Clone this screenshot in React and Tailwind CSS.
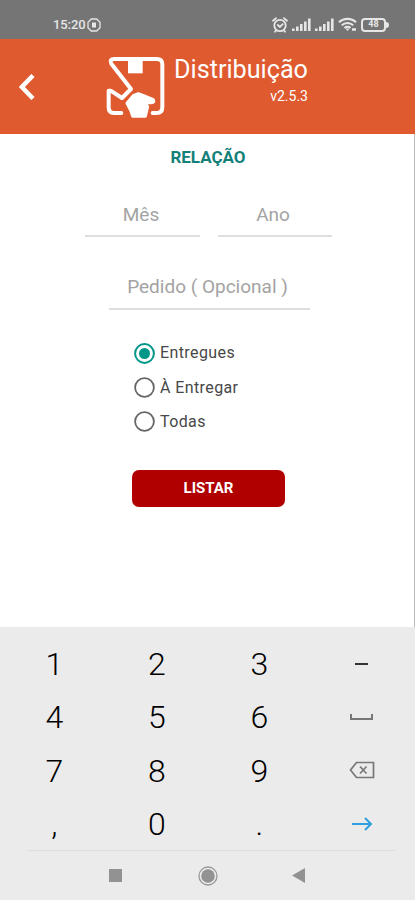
// Distribuicao - ecran "Relacao" avec clavier numerique
import { useState } from 'react';

const OPTIONS = [
  { id: 'entregues', label: 'Entregues' },
  { id: 'a-entregar', label: 'À Entregar' },
  { id: 'todas', label: 'Todas' },
];

const KEYS = ['1', '2', '3', 'minus', '4', '5', '6', 'space', '7', '8', '9', 'backspace', ',', '0', '.', 'next'];

function Signal() {
  return (
    <svg width="19" height="14" viewBox="0 0 19 14" fill="#e6e6e6">
      <rect x="0" y="10.5" width="2.6" height="2.5" />
      <rect x="4" y="8.5" width="2.6" height="4.5" />
      <rect x="8" y="6" width="2.6" height="7" />
      <rect x="12" y="3.5" width="2.6" height="9.5" />
      <rect x="16" y="0.5" width="2.6" height="12.5" />
    </svg>
  );
}

function StatusBar() {
  return (
    <div className="flex h-[39px] shrink-0 items-center bg-[#757575] pt-[10px] pr-[26px] pl-[53px] text-[#e6e6e6]">
      <span className="text-[13px] leading-4 font-medium tracking-[-0.1px]">15:20</span>
      <svg className="ml-[2px]" width="14" height="14" viewBox="0 0 14 14" fill="none" stroke="currentColor" strokeWidth="1.3">
        <path d="M4.3 1h5.4L13 4.3v5.4L9.7 13H4.3L1 9.7V4.3z" />
        <rect x="5" y="4.5" width="4" height="5" fill="currentColor" stroke="none" />
      </svg>
      <div className="ml-auto flex items-center">
        <svg width="16" height="16" viewBox="0 0 16 16" fill="none" stroke="currentColor" strokeWidth="1.8" strokeLinecap="round">
          <circle cx="8" cy="8.5" r="5.7" />
          <path d="M1 3.7 4 1.2M15 3.7 12 1.2M5.8 8l2.1 2 2.8-2.8M4 13.5l-1 1.3M12 13.5l1 1.3" />
        </svg>
        <span className="ml-[4px]"><Signal /></span>
        <span className="ml-[4px]"><Signal /></span>
        <svg className="ml-[4px]" width="19" height="15" viewBox="0 0 19 15" fill="none" stroke="currentColor" strokeWidth="2.1">
          <path d="M1 5.2c4.7-4.5 12.3-4.5 17 0M3.8 8.3c3.2-3 8.2-3 11.4 0M6.5 11c1.7-1.6 4.3-1.6 6 0" />
          <path d="M7.5 11.5h4L9.5 14z" fill="currentColor" stroke="none" />
          <path d="M14 12.5h4" strokeWidth="2.5" />
        </svg>
        <div className="ml-[4px] flex items-center">
          <div className="flex h-[14px] w-[25px] items-center justify-center rounded-[4px] border-2 border-[#e6e6e6] text-[9px] leading-none font-bold">48</div>
          <div className="h-[6px] w-[3px] rounded-r-sm bg-[#e6e6e6]" />
        </div>
      </div>
    </div>
  );
}

function BoxLogo() {
  return (
    <svg width="70" height="75" viewBox="0 0 210 225" fill="none" stroke="#fff" strokeWidth="12" strokeLinejoin="round" strokeLinecap="round">
      <path d="M64 189H42Q26 189 26 172V122L32 122 66 144 93 117 34 41Q27 27 43 27H170Q187 27 187 43V172Q187 189 170 189H158" />
      <path d="M84 25h44v45H84z" fill="#fff" stroke="none" />
      <path d="M81 160 101 136 115 131 133 138 160 149Q165 158 154 158L136 158 143 170 136 199H98L93 183z" fill="#fff" strokeWidth="9" />
    </svg>
  );
}

function Header() {
  return (
    <header className="flex h-[95px] shrink-0 bg-[#e05a2f] text-white">
      <button aria-label="Voltar" className="flex h-[95px] w-[53px] items-center justify-center">
        <svg width="16" height="26" viewBox="0 0 16 26" fill="none" stroke="currentColor" strokeWidth="4.5">
          <path d="M14 1.5 2.8 13 14 24.5" />
        </svg>
      </button>
      <div className="ml-[47px] pt-[11px]"><BoxLogo /></div>
      <div className="ml-[3px] flex w-[135px] flex-col items-end pt-[15px]">
        <h1 className="text-[25.2px] leading-[32px] whitespace-nowrap">Distribuição</h1>
        <span className="text-[14px] leading-[21px]">v2.5.3</span>
      </div>
    </header>
  );
}

function Radio({ label, checked, onChange }) {
  return (
    <label className="flex h-[34.4px] items-center gap-[5px]">
      <input type="radio" name="situacao" className="sr-only" checked={checked} onChange={onChange} />
      <svg width="21" height="21" viewBox="0 0 21 21" fill="none">
        <circle cx="10.5" cy="10.5" r="9.4" stroke={checked ? '#009688' : '#666'} strokeWidth={checked ? 2 : 1.8} />
        {checked && <circle cx="10.5" cy="10.5" r="5.5" fill="#009688" />}
      </svg>
      <span className="text-[16px] leading-5 tracking-[0.4px] text-[#484848]">{label}</span>
    </label>
  );
}

function KeyFace({ name }) {
  switch (name) {
    case 'minus':
      return <div className="h-[2.5px] w-[13px] bg-[#333]" />;
    case 'space':
      return <div className="h-[6px] w-[23px] border-2 border-t-0 border-[#777]" />;
    case 'backspace':
      return (
        <svg className="mt-[-2px]" width="26" height="18" viewBox="0 0 26 18" fill="none" stroke="#777" strokeWidth="1.7">
          <path d="M7.5 1.5H24.5v15H7.5L1.5 9z" />
          <path d="m11 5.5 6.5 7m0-7-6.5 7" />
        </svg>
      );
    case 'next':
      return (
        <svg className="mt-[-1px]" width="22" height="14" viewBox="0 0 22 14" fill="none" stroke="#309fdf" strokeWidth="2">
          <path d="M1 7h18.5M14 1l6 6-6 6" />
        </svg>
      );
    default:
      return <span className="text-[32px] leading-none font-light text-black">{name}</span>;
  }
}

export default function App() {
  const [situacao, setSituacao] = useState('entregues');

  return (
    <div className="flex h-[900px] w-[415px] flex-col overflow-hidden bg-white font-['Roboto',sans-serif]">
      <StatusBar />
      <Header />

      <main className="flex h-[493px] shrink-0 flex-col items-center border-r border-[#bbb]">
        <h2 className="mt-[12px] ml-[2px] text-[17px] leading-[22px] font-bold text-[#128078]">RELAÇÃO</h2>
        <div className="mt-[31px] ml-[2px] flex gap-[18px]">
          <input placeholder="Mês" className="h-[38px] w-[115px] border-b-2 border-[#dedede] pr-[2px] pb-[6px] text-center text-[19px] outline-none placeholder:text-[#a3a3a3]" />
          <input placeholder="Ano" className="h-[38px] w-[114px] border-b-2 border-[#dedede] pr-[3px] pb-[6px] text-center text-[19px] outline-none placeholder:text-[#a3a3a3]" />
        </div>
        <input placeholder="Pedido ( Opcional )" className="mt-[35px] ml-[4px] h-[38px] w-[201px] border-b-2 border-[#dedede] pr-[3px] pb-[8px] text-center text-[19px] outline-none placeholder:text-[#a3a3a3]" />
        <div className="relative mt-[26px] ml-[134px] flex w-[145px] flex-col self-start">
          {OPTIONS.map(o => (
            <Radio key={o.id} label={o.label} checked={situacao === o.id} onChange={() => setSituacao(o.id)} />
          ))}
        </div>
        <button className="mt-[31px] ml-[3px] h-[37px] w-[153px] rounded-[7px] bg-[#b00000] text-[15px] font-bold text-white">LISTAR</button>
      </main>

      <section className="flex flex-1 flex-col bg-[#ebebeb]">
        <div className="grid h-[223px] grid-cols-4 grid-rows-[repeat(4,53.5px)] pt-[10px] pr-[2px] pl-[3px]">
          {KEYS.map(k => (
            <button key={k} aria-label={k} className="flex items-center justify-center">
              <KeyFace name={k} />
            </button>
          ))}
        </div>
        <div className="mr-[20px] ml-[27px] h-px bg-[#dedede]" />
        <nav className="flex h-[49px] items-center pl-[109px]">
          <div className="h-[13px] w-[13px] bg-[#929292]" />
          <svg className="ml-[76px]" width="20" height="20" viewBox="0 0 20 20">
            <circle cx="10" cy="10" r="9" fill="none" stroke="#999" strokeWidth="1.3" />
            <circle cx="10" cy="10" r="6.8" fill="#929292" />
          </svg>
          <svg className="ml-[74px]" width="13" height="15" viewBox="0 0 13 15" fill="#929292">
            <path d="M0 7.5 13 0v15z" />
          </svg>
        </nav>
      </section>
    </div>
  );
}
